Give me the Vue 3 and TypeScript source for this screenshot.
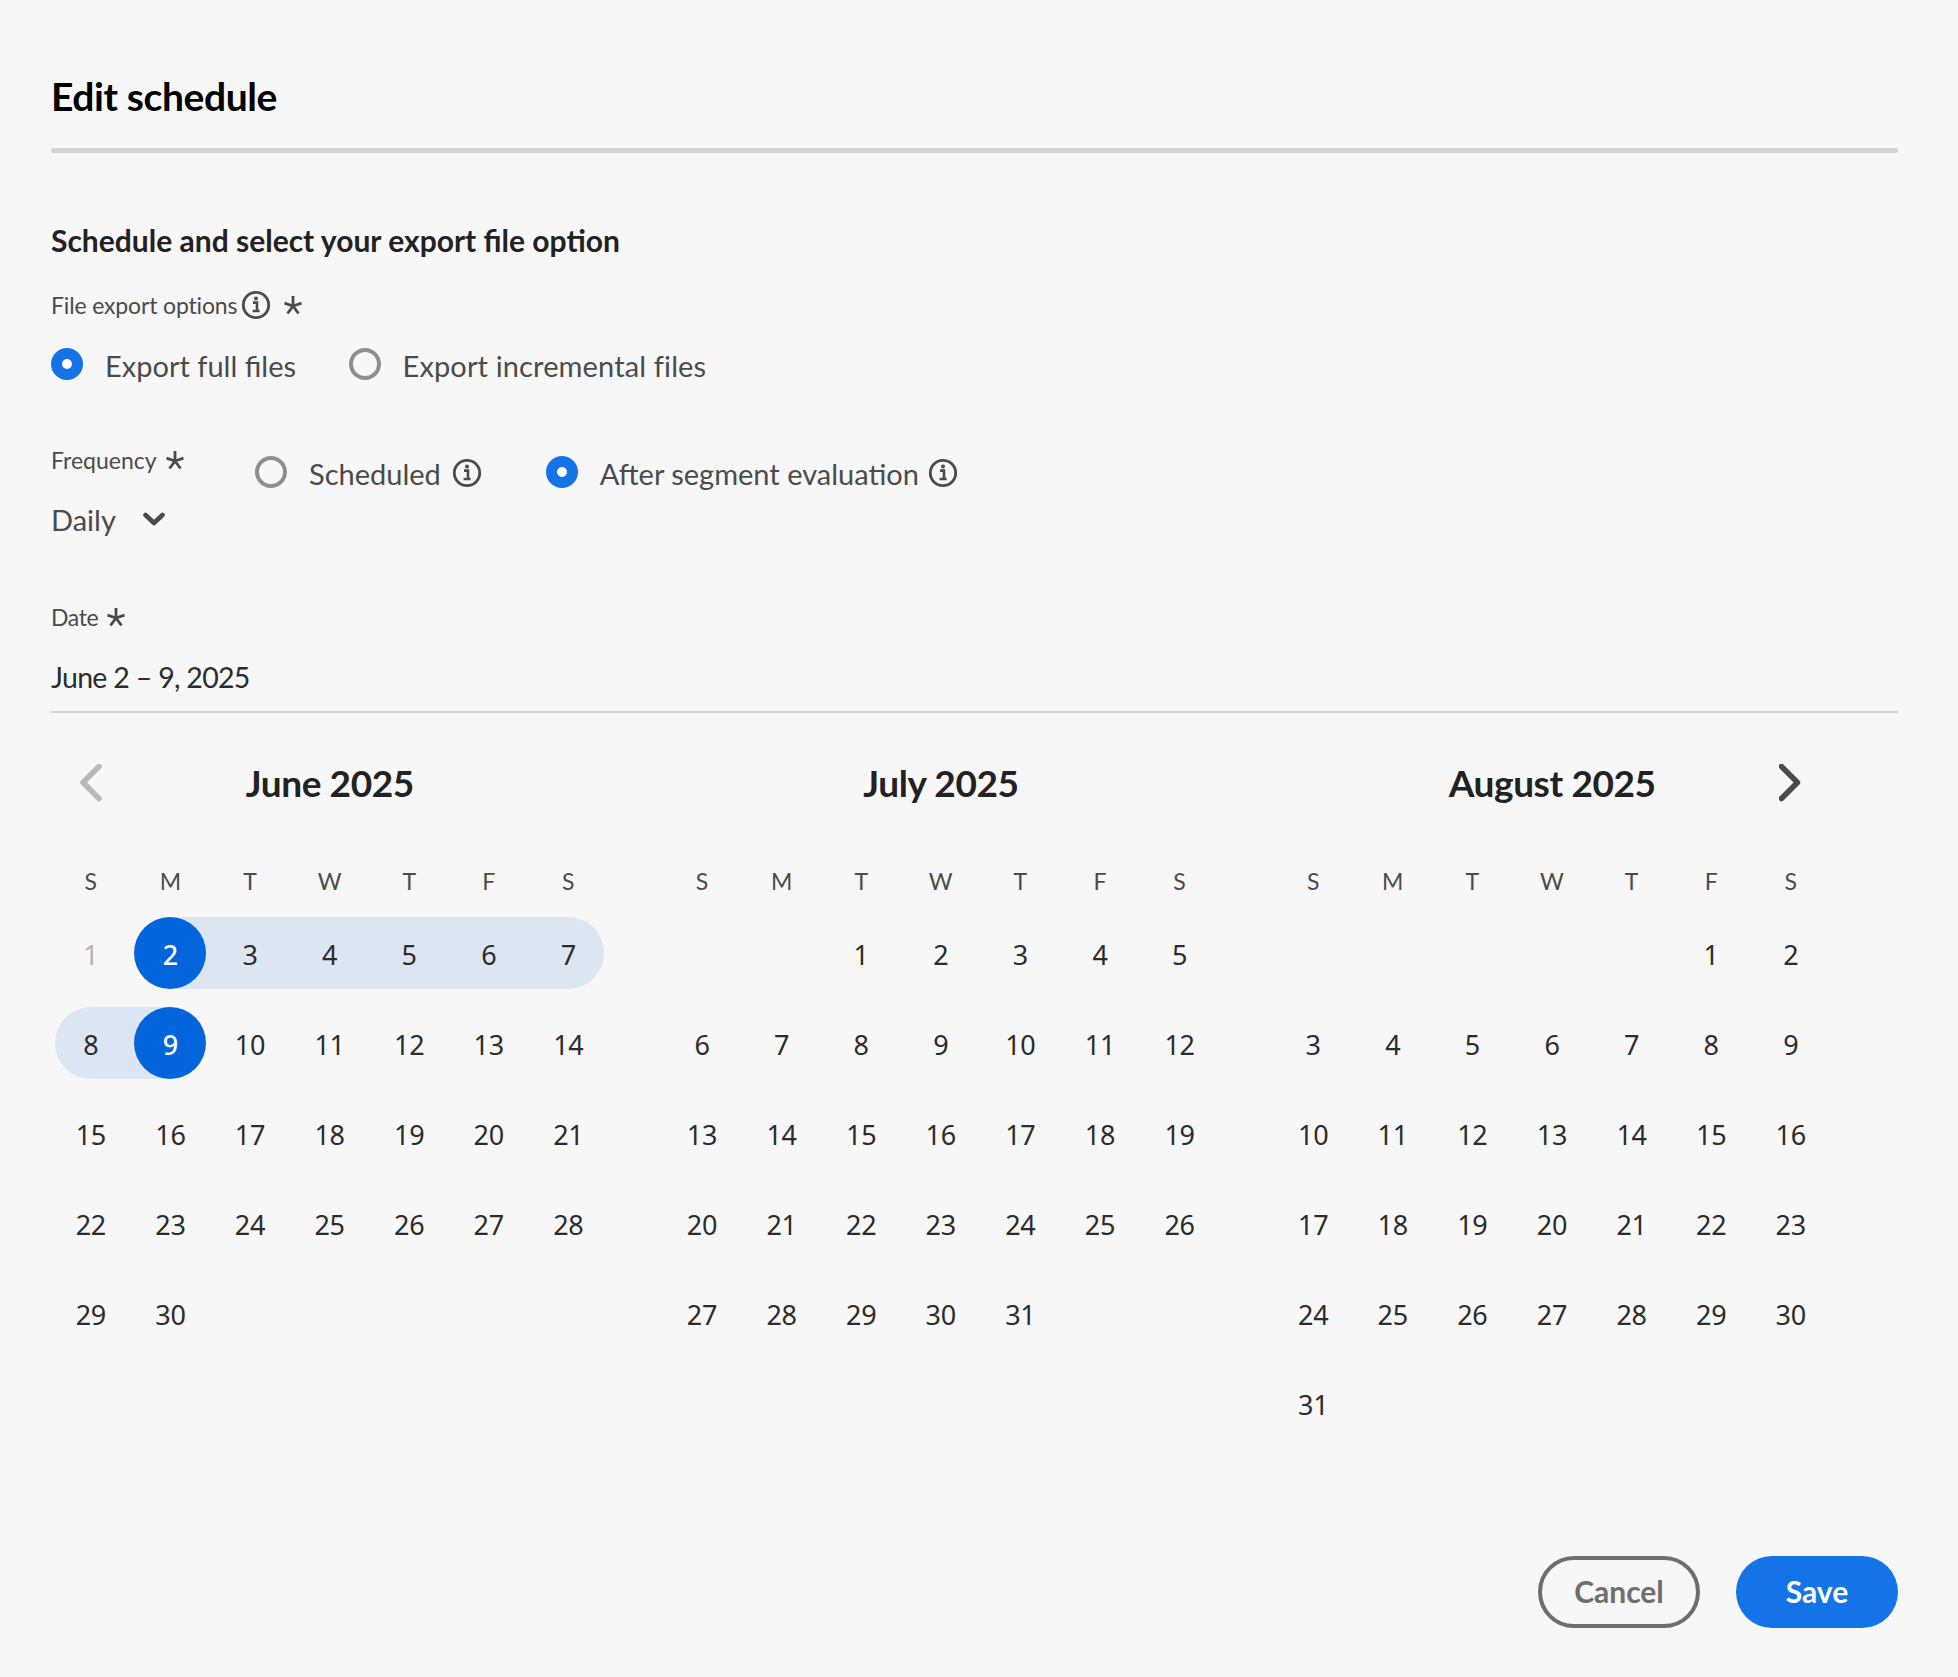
<script setup lang="ts">
interface Cell { key: string; label: string; cls: string }
interface Month { title: string; cells: Cell[] }

const weekdays = ['S', 'M', 'T', 'W', 'T', 'F', 'S']

function buildMonth(title: string, offset: number, count: number, june: boolean): Month {
  const cells: Cell[] = []
  for (let i = 0; i < offset; i++) cells.push({ key: 'b' + i, label: '', cls: '' })
  for (let d = 1; d <= count; d++) {
    let cls = ''
    if (june) {
      if (d === 1) cls = 'muted'
      else if (d === 2) cls = 'sel start'
      else if (d === 9) cls = 'sel stop'
      else if (d === 7) cls = 'band tail'
      else if (d === 8) cls = 'band head'
      else if (d > 2 && d < 7) cls = 'band'
    }
    cells.push({ key: 'd' + d, label: String(d), cls })
  }
  return { title, cells }
}

const months: Month[] = [
  buildMonth('June 2025', 0, 30, true),
  buildMonth('July 2025', 2, 31, false),
  buildMonth('August 2025', 5, 31, false),
]
</script>

<template>
  <main class="page">
    <h1 class="title">Edit schedule</h1>
    <div class="rule-thick"></div>
    <h2 class="heading">Schedule and select your export file option</h2>

    <div class="label export-label">
      <span>File export options</span>
      <svg class="info tight" viewBox="0 0 30 30"><circle cx="15" cy="15" r="12.7" /><path d="M12 12.6h4v8M11.6 21h7" /><circle class="dot" cx="15" cy="8.6" r="2" /></svg>
      <svg class="star" viewBox="0 0 20 20"><path d="M10 1v10M10 11l8.5-2.8M10 11l5.5 7.5M10 11l-5.5 7.5M10 11L1.500 8.200" /></svg>
    </div>
    <div class="radios export-radios">
      <label class="radio"><span class="dot-radio on"></span><span>Export full files</span></label>
      <label class="radio"><span class="dot-radio"></span><span class="loose">Export incremental files</span></label>
    </div>

    <div class="freq-row">
      <div class="freq-col">
        <div class="label">
          <span>Frequency</span>
          <svg class="star near" viewBox="0 0 20 20"><path d="M10 1v10M10 11l8.5-2.8M10 11l5.5 7.5M10 11l-5.5 7.5M10 11L1.500 8.200" /></svg>
        </div>
        <div class="select">
          <span>Daily</span>
          <svg class="chev-down" viewBox="0 0 24 14"><path d="M3.500 3L12 11l8.500-8" /></svg>
        </div>
      </div>
      <div class="radios freq-radios">
        <label class="radio">
          <span class="dot-radio"></span><span>Scheduled</span>
          <svg class="info wide" viewBox="0 0 30 30"><circle cx="15" cy="15" r="12.7" /><path d="M12 12.6h4v8M11.6 21h7" /><circle class="dot" cx="15" cy="8.6" r="2" /></svg>
        </label>
        <label class="radio">
          <span class="dot-radio on"></span><span>After segment evaluation</span>
          <svg class="info" viewBox="0 0 30 30"><circle cx="15" cy="15" r="12.7" /><path d="M12 12.6h4v8M11.6 21h7" /><circle class="dot" cx="15" cy="8.6" r="2" /></svg>
        </label>
      </div>
    </div>

    <div class="label date-label">
      <span>Date</span>
      <svg class="star near" viewBox="0 0 20 20"><path d="M10 1v10M10 11l8.5-2.8M10 11l5.5 7.5M10 11l-5.5 7.5M10 11L1.500 8.200" /></svg>
    </div>
    <div class="date-value">June 2 – 9, 2025</div>

    <section class="calendars">
      <div v-for="(m, mi) in months" :key="m.title" class="month">
        <header class="month-head">
          <button class="nav" :class="{ hidden: mi !== 0, off: mi === 0 }" type="button">
            <svg viewBox="0 0 24 38"><path d="M20 2.500L4 18.500l16 16" /></svg>
          </button>
          <div class="month-title">{{ m.title }}</div>
          <button class="nav" :class="{ hidden: mi !== 2 }" type="button">
            <svg viewBox="0 0 24 38"><path d="M2.500 2.500l16 16-16 16" /></svg>
          </button>
        </header>
        <div class="weekdays">
          <span v-for="(w, i) in weekdays" :key="i">{{ w }}</span>
        </div>
        <div class="days">
          <div v-for="c in m.cells" :key="c.key" class="day" :class="c.cls">
            <span class="num">{{ c.label }}</span>
          </div>
        </div>
      </div>
    </section>

    <footer class="actions">
      <button class="btn ghost" type="button">Cancel</button>
      <button class="btn primary" type="button">Save</button>
    </footer>
  </main>
</template>

<style>
html, body { margin: 0; background: #f7f7f7; }
</style>

<style scoped>
.page {
  box-sizing: border-box;
  width: 1958px;
  height: 1677px;
  padding: 0 60px 49px 51px;
  background: #f7f7f7;
  font-family: Lato, "Noto Sans", sans-serif;
  color: #4b4b4b;
  display: flex;
  flex-direction: column;
}
.title {
  margin: 71.5px 0 0;
  height: 48px;
  line-height: 48px;
  font-size: 39px;
  font-weight: 700;
  color: #000;
  letter-spacing: -0.4px;
}
.rule-thick {
  height: 5px;
  margin-top: 28.5px;
  background: #d3d3d3;
  border-radius: 2px;
}
.heading {
  margin: 69px 0 0;
  height: 36px;
  line-height: 36px;
  font-size: 30px;
  font-weight: 700;
  color: #222;
}
.label {
  display: flex;
  align-items: center;
  height: 30px;
  font-size: 23px;
  color: #4b4b4b;
}
.export-label { margin-top: 32px; }
.export-label span { letter-spacing: -0.15px; }
.info { width: 30px; height: 30px; flex: none; margin-left: 9px; }
.info.wide { margin-left: 11px; }
.info.tight { margin-left: 4px; margin-right: 3px; }
.info circle { fill: none; stroke: #4b4b4b; stroke-width: 2.8; }
.info path { fill: none; stroke: #4b4b4b; stroke-width: 2.6; }
.info circle.dot { fill: #4b4b4b; stroke: none; }
.star { width: 20px; height: 20px; flex: none; margin-left: 9px; }
.star.near { margin-left: 8px; }
.star path { fill: none; stroke: #4b4b4b; stroke-width: 2.8; }
.radios { display: flex; }
.radio {
  display: flex;
  align-items: center;
  font-size: 29px;
  color: #4b4b4b;
  height: 36px;
}
.loose { letter-spacing: 0.13px; }
.dot-radio {
  box-sizing: border-box;
  width: 32px;
  height: 32px;
  flex: none;
  border-radius: 50%;
  border: 4px solid #8e8e8e;
  margin-right: 22px;
  margin-bottom: 3px;
  background: #f7f7f7;
}
.dot-radio.on { border: 11px solid #1473e6; background: #fff; }
.export-radios { margin-top: 27px; gap: 52.5px; height: 36px; }
.freq-row { display: flex; margin-top: 62px; }
.freq-col { width: 204px; }
.freq-radios { gap: 64px; margin-top: 10px; }
.select {
  display: flex;
  align-items: center;
  margin-top: 26px;
  height: 36px;
  font-size: 29px;
  color: #4b4b4b;
}
.chev-down { width: 24px; height: 14px; margin-left: 26px; }
.chev-down path { fill: none; stroke: #4b4b4b; stroke-width: 4.6; stroke-linecap: round; stroke-linejoin: round; }
.date-label { margin-top: 65px; }
.date-label span { letter-spacing: -0.4px; }
.date-value {
  margin-top: 27px;
  height: 36px;
  line-height: 36px;
  font-size: 28.5px;
  letter-spacing: -0.7px;
  color: #2c2c2c;
  padding-bottom: 16px;
  border-bottom: 2px solid #d3d3d3;
}
.calendars { display: flex; gap: 53.6px; margin-top: 45.5px; }
.month { width: 557.6px; }
.month-head { display: flex; align-items: center; height: 48px; }
.nav {
  width: 79.6px;
  height: 48px;
  padding: 0;
  border: 0;
  background: none;
  display: flex;
  align-items: center;
  justify-content: center;
  flex: none;
}
.nav svg { width: 24px; height: 38px; }
.nav path { fill: none; stroke: #4b4b4b; stroke-width: 5.5; stroke-linecap: round; stroke-linejoin: round; }
.nav.off path { stroke: #b9b9b9; }
.nav.hidden { visibility: hidden; }
.month-title {
  flex: 1;
  text-align: center;
  font-size: 37px;
  font-weight: 700;
  color: #222;
  letter-spacing: -0.4px;
}
.weekdays {
  display: grid;
  grid-template-columns: repeat(7, 79.6px);
  margin-top: 59.5px;
  height: 30px;
  line-height: 30px;
  text-align: center;
  font-size: 23px;
  color: #4b4b4b;
}
.days {
  display: grid;
  grid-template-columns: repeat(7, 79.6px);
  grid-auto-rows: 72px;
  row-gap: 18px;
  margin-top: 21px;
}
.day { display: flex; align-items: center; justify-content: center; }
.num {
  flex: none;
  width: 72px;
  height: 72px;
  line-height: 75px;
  text-align: center;
  border-radius: 50%;
  font-family: "Noto Sans", sans-serif;
  font-size: 27px;
  letter-spacing: -0.3px;
  color: #2c2c2c;
}
.day.muted .num { color: #b3b3b3; }
.day.band { background: #dce6f3; }
.day.tail { margin-right: 4px; border-radius: 0 36px 36px 0; }
.day.tail .num { margin-right: -4px; }
.day.head { margin-left: 4px; border-radius: 36px 0 0 36px; }
.day.head .num { margin-left: -4px; }
.day.start { background: linear-gradient(to right, transparent 50%, #dce6f3 50%); }
.day.stop { background: linear-gradient(to left, transparent 50%, #dce6f3 50%); }
.day.sel .num { background: #0265dc; color: #fff; font-weight: 500; }
.actions { display: flex; justify-content: flex-end; gap: 36px; margin-top: auto; }
.btn {
  box-sizing: border-box;
  width: 162px;
  height: 72px;
  border-radius: 36px;
  font-family: inherit;
  font-size: 30px;
  font-weight: 700;
  padding: 0 0 2px;
}
.btn.ghost { background: transparent; border: 4px solid #6e6e6e; color: #6e6e6e; }
.btn.primary { background: #1473e6; border: 0; color: #fff; }
</style>
